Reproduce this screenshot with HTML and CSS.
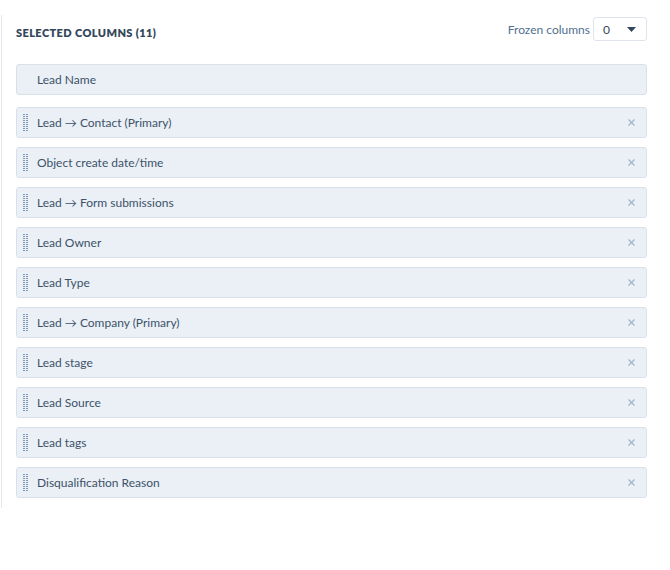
FILE: index.html
```html
<!DOCTYPE html>
<html lang="en">
<head>
    <meta charset="UTF-8">
    <meta name="viewport" content="width=device-width, initial-scale=1.0">
    <title>Selected columns</title>
    <link rel="stylesheet" href="styles.css">
</head>
<body>
    <div class="panel">
        <div class="panel-header">
            <h2 class="panel-title">SELECTED COLUMNS (11)</h2>
            <div class="frozen">
                <span class="frozen-label">Frozen columns</span>
                <div class="select">
                    <span>0</span>
                    <svg class="caret" width="9" height="5" viewBox="0 0 9 5"><path d="M0 0h9L4.5 5z"></path></svg>
                </div>
            </div>
        </div>

        <div class="column-row fixed">Lead Name</div>

        <ul class="column-list">
            <li class="column-row">
                <svg class="handle" width="5" height="18" viewBox="0 0 5 18"><rect width="5" height="18" fill="url(#dots)"></rect></svg>
                <span class="column-name">Lead → Contact (Primary)</span>
                <svg class="remove" width="7" height="7" viewBox="0 0 7 7"><path d="M0.5 0.5l6 6M6.5 0.5l-6 6"></path></svg>
            </li>
            <li class="column-row">
                <svg class="handle" width="5" height="18" viewBox="0 0 5 18"><rect width="5" height="18" fill="url(#dots)"></rect></svg>
                <span class="column-name">Object create date/time</span>
                <svg class="remove" width="7" height="7" viewBox="0 0 7 7"><path d="M0.5 0.5l6 6M6.5 0.5l-6 6"></path></svg>
            </li>
            <li class="column-row">
                <svg class="handle" width="5" height="18" viewBox="0 0 5 18"><rect width="5" height="18" fill="url(#dots)"></rect></svg>
                <span class="column-name">Lead → Form submissions</span>
                <svg class="remove" width="7" height="7" viewBox="0 0 7 7"><path d="M0.5 0.5l6 6M6.5 0.5l-6 6"></path></svg>
            </li>
            <li class="column-row">
                <svg class="handle" width="5" height="18" viewBox="0 0 5 18"><rect width="5" height="18" fill="url(#dots)"></rect></svg>
                <span class="column-name">Lead Owner</span>
                <svg class="remove" width="7" height="7" viewBox="0 0 7 7"><path d="M0.5 0.5l6 6M6.5 0.5l-6 6"></path></svg>
            </li>
            <li class="column-row">
                <svg class="handle" width="5" height="18" viewBox="0 0 5 18"><rect width="5" height="18" fill="url(#dots)"></rect></svg>
                <span class="column-name">Lead Type</span>
                <svg class="remove" width="7" height="7" viewBox="0 0 7 7"><path d="M0.5 0.5l6 6M6.5 0.5l-6 6"></path></svg>
            </li>
            <li class="column-row">
                <svg class="handle" width="5" height="18" viewBox="0 0 5 18"><rect width="5" height="18" fill="url(#dots)"></rect></svg>
                <span class="column-name">Lead → Company (Primary)</span>
                <svg class="remove" width="7" height="7" viewBox="0 0 7 7"><path d="M0.5 0.5l6 6M6.5 0.5l-6 6"></path></svg>
            </li>
            <li class="column-row">
                <svg class="handle" width="5" height="18" viewBox="0 0 5 18"><rect width="5" height="18" fill="url(#dots)"></rect></svg>
                <span class="column-name">Lead stage</span>
                <svg class="remove" width="7" height="7" viewBox="0 0 7 7"><path d="M0.5 0.5l6 6M6.5 0.5l-6 6"></path></svg>
            </li>
            <li class="column-row">
                <svg class="handle" width="5" height="18" viewBox="0 0 5 18"><rect width="5" height="18" fill="url(#dots)"></rect></svg>
                <span class="column-name">Lead Source</span>
                <svg class="remove" width="7" height="7" viewBox="0 0 7 7"><path d="M0.5 0.5l6 6M6.5 0.5l-6 6"></path></svg>
            </li>
            <li class="column-row">
                <svg class="handle" width="5" height="18" viewBox="0 0 5 18"><rect width="5" height="18" fill="url(#dots)"></rect></svg>
                <span class="column-name">Lead tags</span>
                <svg class="remove" width="7" height="7" viewBox="0 0 7 7"><path d="M0.5 0.5l6 6M6.5 0.5l-6 6"></path></svg>
            </li>
            <li class="column-row">
                <svg class="handle" width="5" height="18" viewBox="0 0 5 18"><rect width="5" height="18" fill="url(#dots)"></rect></svg>
                <span class="column-name">Disqualification Reason</span>
                <svg class="remove" width="7" height="7" viewBox="0 0 7 7"><path d="M0.5 0.5l6 6M6.5 0.5l-6 6"></path></svg>
            </li>
        </ul>
    </div>

    <svg width="0" height="0" class="defs">
        <defs>
            <pattern id="dots" width="3" height="2" patternUnits="userSpaceOnUse">
                <rect width="2" height="1" fill="#7c98b6"></rect>
            </pattern>
        </defs>
    </svg>
</body>
</html>
```

FILE: styles.css
```css
body {
    margin: 0;
    background: #fff;
    font-family: Lato, "Noto Sans", Arial, sans-serif;
    color: #33475b;
}
.panel {
    margin: 15px 0 0 1px;
    height: 493px;
    box-sizing: border-box;
    border-left: 1px solid #e5e9ef;
    padding: 2px 23px 0 14px;
}
.panel-header {
    display: flex;
    justify-content: space-between;
    align-items: flex-start;
    margin-bottom: 23px;
}
.panel-title {
    margin: 9px 0 0;
    font-size: 11px;
    line-height: 14px;
    font-weight: 800;
    letter-spacing: 0.4px;
}
.frozen {
    display: flex;
    align-items: center;
    gap: 3px;
}
.frozen-label {
    font-size: 12px;
    color: #516f90;
}
.select {
    display: flex;
    align-items: center;
    justify-content: space-between;
    width: 54px;
    height: 24px;
    box-sizing: border-box;
    padding: 0 10px 0 9px;
    border: 1px solid #dfe3eb;
    border-radius: 3px;
    background: #fff;
    font-size: 12px;
}
.caret {
    fill: #33475b;
}
.column-list {
    list-style: none;
    margin: 12px 0 0;
    padding: 0;
    display: flex;
    flex-direction: column;
    gap: 9px;
}
.column-row {
    display: flex;
    align-items: center;
    height: 31px;
    box-sizing: border-box;
    padding: 0 11px 0 6px;
    background: #eaf0f6;
    border: 1px solid #d8e1ea;
    border-radius: 3px;
    font-size: 12px;
    color: #3d5269;
}
.column-row.fixed {
    padding-left: 20px;
}
.handle {
    flex: none;
    margin-right: 9px;
}
.column-name {
    flex: 1;
}
.remove {
    stroke: #9fb2c6;
    stroke-width: 1.1;
}
.defs {
    position: absolute;
}
```
